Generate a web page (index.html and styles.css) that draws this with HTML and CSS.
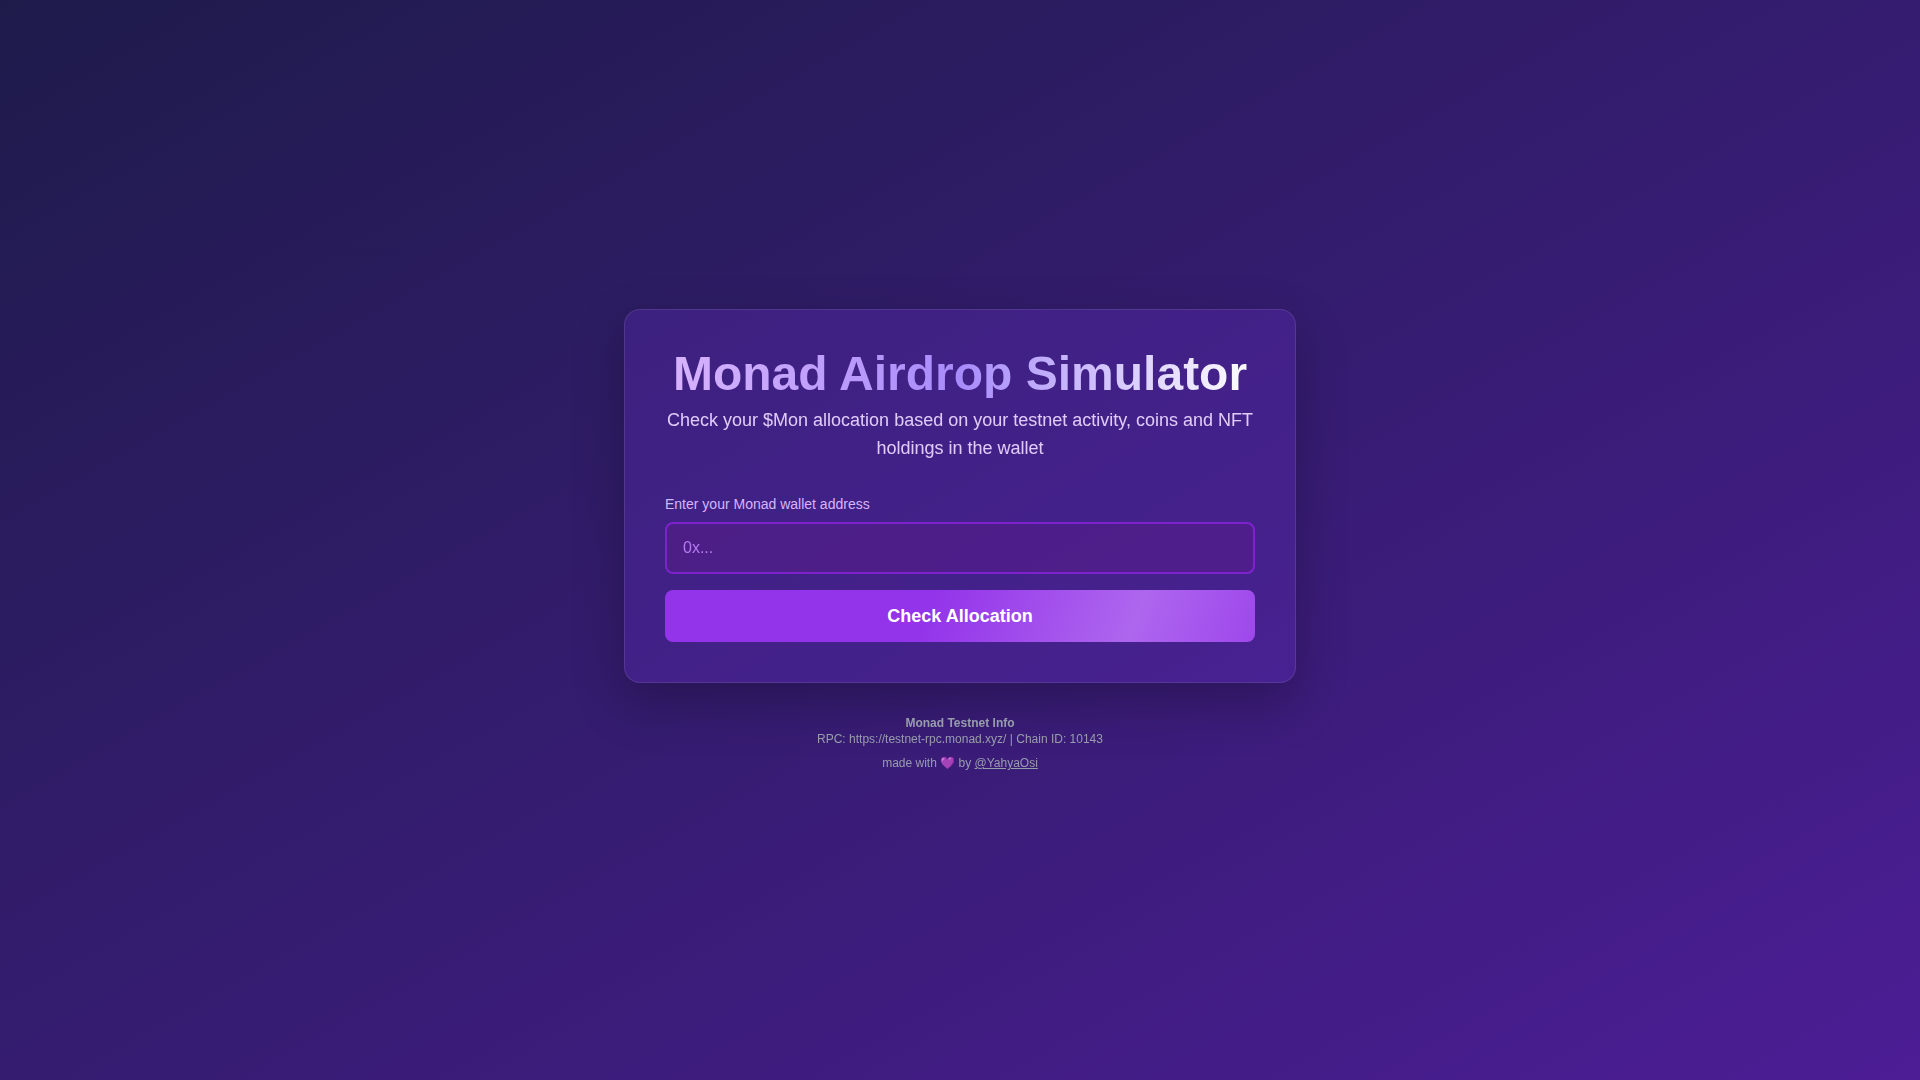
FILE: index.html
```html
<!DOCTYPE html>
<html lang="en">
<head>
    <meta charset="UTF-8">
    <meta name="viewport" content="width=device-width, initial-scale=1.0">
    <title>Monad Airdrop Simulator</title>
    <link rel="stylesheet" href="styles.css">
</head>
<body>
<main class="card">
    <header class="card-header">
        <h1 class="title">Monad Airdrop Simulator</h1>
        <p class="subtitle">Check your $Mon allocation based on your testnet activity, coins and NFT holdings in the wallet</p>
    </header>
    <form class="wallet-form">
        <div class="field">
            <label for="wallet">Enter your Monad wallet address</label>
            <input type="text" id="wallet" placeholder="0x...">
        </div>
        <button type="submit" class="check-btn">Check Allocation</button>
    </form>
</main>
<footer class="footer">
    <p class="footer-title">Monad Testnet Info</p>
    <p>RPC: https://testnet-rpc.monad.xyz/ | Chain ID: 10143</p>
    <p class="credit">made with 💜 by <a href="#">@YahyaOsi</a></p>
</footer>
</body>
</html>
```

FILE: styles.css
```css
*{
    margin: 0;
    padding: 0;
    box-sizing: border-box;
}
body{
    min-height: 100vh;
    display: flex;
    flex-direction: column;
    align-items: center;
    justify-content: center;
    padding: 16px;
    font-family: "Liberation Sans", Arial, sans-serif;
    color: #fff;
    background: linear-gradient(to bottom right, #1e1b4b, #4c1d95);
}
.card{
    width: 100%;
    max-width: 672px;
    padding: 40px;
    border: 1px solid rgba(255, 255, 255, 0.1);
    border-radius: 16px;
    background: rgba(98, 45, 196, 0.3);
    box-shadow: 0 20px 50px rgba(0, 0, 0, 0.25);
}
.card-header{
    margin-bottom: 32px;
    text-align: center;
}
.title{
    margin-bottom: 8px;
    font-size: 48px;
    line-height: 48px;
    background: linear-gradient(to right, #d8b4fe, #a78bfa, #fff);
    -webkit-background-clip: text;
    background-clip: text;
    color: transparent;
}
.subtitle{
    font-size: 18px;
    line-height: 28px;
    color: #e9d5ff;
    opacity: 0.95;
}
.wallet-form{
    display: flex;
    flex-direction: column;
    gap: 16px;
}
.field{
    display: flex;
    flex-direction: column;
    gap: 8px;
}
.field label{
    font-size: 14px;
    line-height: 20px;
    color: #d8b4fe;
}
.field input{
    width: 100%;
    padding: 12px 16px;
    border: 2px solid #7e22ce;
    border-radius: 8px;
    background: rgba(88, 28, 135, 0.5);
    color: #fff;
    font-family: inherit;
    font-size: 16px;
    line-height: 24px;
    outline: none;
}
.field input::placeholder{
    color: #c084fc;
    opacity: 0.9;
}
.check-btn{
    padding: 12px 24px;
    border: none;
    border-radius: 8px;
    background: linear-gradient(110deg, #9333ea 44%, #ae66ee 79%, #9333ea 114%);
    color: #fff;
    font-family: inherit;
    font-size: 18px;
    font-weight: bold;
    line-height: 28px;
    cursor: pointer;
}
.footer{
    margin-top: 32px;
    font-size: 12px;
    line-height: 16px;
    text-align: center;
    color: #9ca3af;
    opacity: 0.95;
}
.footer-title{
    font-weight: bold;
}
.credit{
    margin-top: 8px;
}
.credit a{
    color: inherit;
    text-decoration: underline;
}
```
